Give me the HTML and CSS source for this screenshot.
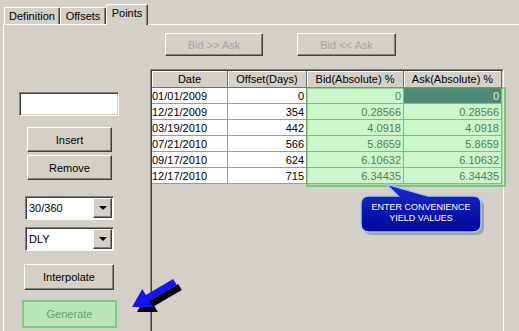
FILE: index.html
```html
<!DOCTYPE html>
<html>
<head>
<meta charset="utf-8">
<title>Points</title>
<link rel="stylesheet" href="styles.css">
</head>
<body>
<div class="window">
  <div class="tabs">
    <div class="tab tab-def">Definition</div>
    <div class="tab tab-off">Offsets</div>
    <div class="tab active">Points</div>
  </div>
  <div class="panel">
    <div class="left">
      <div class="textbox"></div>
      <button class="btn insert">Insert</button>
      <button class="btn remove">Remove</button>
      <div class="combo c1"><span class="val">30/360</span><span class="drop"><i></i></span></div>
      <div class="combo c2"><span class="val">DLY</span><span class="drop"><i></i></span></div>
      <button class="btn interp">Interpolate</button>
      <button class="btn generate">Generate</button>
    </div>
    <div class="right">
      <div class="topbtns">
        <button class="btn dis">Bid &gt;&gt; Ask</button>
        <button class="btn dis">Bid &lt;&lt; Ask</button>
      </div>
      <div class="grid">
        <div class="grid-inner">
          <div class="h">Date</div><div class="h">Offset(Days)</div><div class="h">Bid(Absolute) %</div><div class="h">Ask(Absolute) %</div>
          <div class="c">01/01/2009</div><div class="c r">0</div><div class="c r g">0</div><div class="c r sel">0</div>
          <div class="c">12/21/2009</div><div class="c r">354</div><div class="c r g">0.28566</div><div class="c r g">0.28566</div>
          <div class="c">03/19/2010</div><div class="c r">442</div><div class="c r g">4.0918</div><div class="c r g">4.0918</div>
          <div class="c">07/21/2010</div><div class="c r">566</div><div class="c r g">5.8659</div><div class="c r g">5.8659</div>
          <div class="c">09/17/2010</div><div class="c r">624</div><div class="c r g">6.10632</div><div class="c r g">6.10632</div>
          <div class="c">12/17/2010</div><div class="c r">715</div><div class="c r g">6.34435</div><div class="c r g">6.34435</div>
        </div>
        <div class="highlight"></div>
      </div>
    </div>
  </div>
</div>
<svg class="overlay" width="519" height="331" viewBox="0 0 519 331">
  <defs>
    <linearGradient id="cg" x1="0" y1="0" x2="0" y2="1">
      <stop offset="0" stop-color="#1a2ccc"/>
      <stop offset="1" stop-color="#00069a"/>
    </linearGradient>
  </defs>
  <path d="M369 196 L398 196 L386 184 L428 196 L473 196 Q481 196 481 204 L481 224 Q481 232 473 232 L369 232 Q361 232 361 224 L361 204 Q361 196 369 196 Z" transform="translate(3 3)" fill="rgba(0,0,0,0.22)"/>
  <path d="M369 196 L398 196 L386 184 L428 196 L473 196 Q481 196 481 204 L481 224 Q481 232 473 232 L369 232 Q361 232 361 224 L361 204 Q361 196 369 196 Z" fill="url(#cg)" stroke="#9cc8f0" stroke-width="1.5"/>
  <polygon points="173.2,279 145.8,294.9 142.3,288.9 132,307 152.9,307 149.3,301 176.8,285" transform="translate(5 5)" fill="#000"/>
  <polygon points="173.2,279 145.8,294.9 142.3,288.9 132,307 152.9,307 149.3,301 176.8,285" fill="#1414f5"/>
</svg>
<div class="callout-text">ENTER CONVENIENCE<br>YIELD VALUES</div>
</body>
</html>
```
FILE: styles.css
```css
* { box-sizing: border-box; }
html, body { margin: 0; padding: 0; }
body {
  width: 519px;
  height: 331px;
  overflow: hidden;
  background: #d4d0c8;
  font-family: "Liberation Sans", Arial, sans-serif;
  font-size: 11px;
  color: #000;
  position: relative;
}
.window { padding-left: 3px; }
.tabs {
  display: flex;
  align-items: flex-end;
  height: 24px;
  padding-left: 1px;
}
.tab {
  height: 17px;
  border-top: 1px solid #fff;
  border-left: 1px solid #fff;
  border-right: 1px solid #404040;
  box-shadow: inset -1px 0 #808080;
  border-radius: 2px 2px 0 0;
  display: flex;
  align-items: center;
  justify-content: center;
  white-space: nowrap;
}
.tab-def { width: 56px; }
.tab-off { width: 46px; }
.tab.active {
  width: 42px;
  height: 21px;
  margin-bottom: -1px;
  position: relative;
  z-index: 1;
  background: #d4d0c8;
  align-items: flex-start;
  padding-top: 2px;
}
.panel {
  border-top: 1px solid #fff;
  border-left: 1px solid #fff;
  height: 320px;
  display: flex;
}
.left {
  width: 146px;
  flex: none;
  display: flex;
  flex-direction: column;
  align-items: flex-start;
}
.btn {
  font-family: inherit;
  font-size: 11px;
  background: #d4d0c8;
  border: 1px solid;
  border-color: #fff #404040 #404040 #fff;
  box-shadow: inset -1px -1px #808080;
  padding: 0;
  color: #000;
  display: block;
}
.textbox {
  margin: 67px 0 0 15px;
  width: 100px;
  height: 24px;
  background: #fff;
  border: 1px solid;
  border-color: #808080 #fff #fff #808080;
  box-shadow: inset 1px 1px #404040, inset -1px -1px #d4d0c8;
}
.insert { margin: 11px 0 0 23px; width: 85px; height: 25px; }
.remove { margin: 3px 0 0 23px; width: 85px; height: 25px; }
.combo {
  width: 89px;
  height: 24px;
  background: #fff;
  border: 1px solid;
  border-color: #808080 #fff #fff #808080;
  box-shadow: inset 1px 1px #404040;
  display: flex;
  padding: 1px 1px 1px 1px;
  margin-left: 21px;
}
.c1 { margin-top: 16px; }
.c2 { margin-top: 7px; }
.combo .val {
  flex: 1;
  display: flex;
  align-items: center;
  padding-left: 2px;
}
.combo .drop {
  width: 19px;
  background: #d4d0c8;
  border: 1px solid;
  border-color: #fff #404040 #404040 #fff;
  box-shadow: inset -1px -1px #808080;
  display: flex;
  align-items: center;
  justify-content: center;
}
.combo .drop i {
  display: block;
  width: 0;
  height: 0;
  border-left: 4px solid transparent;
  border-right: 4px solid transparent;
  border-top: 4px solid #000;
}
.interp { margin: 13px 0 0 20px; width: 90px; height: 26px; }
.generate {
  margin: 10px 0 0 18px;
  width: 95px;
  height: 28px;
  background: #b8e6b8;
  border: 2px solid #7fcc7f;
  box-shadow: 0 0 1px #a0dda0;
  color: #6a9a6a;
}
.right {
  flex: 1;
  display: flex;
  flex-direction: column;
}
.topbtns {
  display: flex;
  gap: 34px;
  margin: 8px 0 0 15px;
}
.topbtns .btn {
  width: 98px;
  height: 23px;
  color: #a4a4a4;
}
.topbtns .btn + .btn { width: 99px; }
.grid {
  margin-top: 13px;
  width: 354px;
  height: 280px;
  border: 1px solid;
  border-color: #808080 #fff #fff #808080;
  position: relative;
}
.grid-inner {
  height: 100%;
  border: 1px solid;
  border-color: #404040 #d4d0c8 #d4d0c8 #404040;
  display: grid;
  grid-template-columns: 76px 79px 97px 98px;
  grid-template-rows: 17px repeat(6, 16px);
  align-content: start;
}
.h {
  background: #d4d0c8;
  border-right: 1px solid #707070;
  border-bottom: 1px solid #707070;
  box-shadow: inset 1px 1px #fff;
  display: flex;
  align-items: center;
  justify-content: center;
  white-space: nowrap;
}
.c {
  background: #fff;
  border-right: 1px solid #9a9a9a;
  border-bottom: 1px solid #9a9a9a;
  display: flex;
  align-items: center;
  padding: 0 2px 0 0;
  white-space: nowrap;
}
.c.r { justify-content: flex-end; }
.c.g { color: #404040; }
.c.sel { background: #365378; color: #fff; }
.highlight {
  position: absolute;
  left: 155px;
  top: 17px;
  width: 200px;
  height: 100px;
  background: rgba(120, 230, 120, 0.38);
  border: 2px solid rgba(70, 170, 70, 0.45);
}
.overlay {
  position: absolute;
  left: 0;
  top: 0;
  pointer-events: none;
}
.callout-text {
  position: absolute;
  left: 361px;
  top: 202px;
  width: 120px;
  text-align: center;
  color: #fff;
  font-size: 9px;
  line-height: 11px;
}
```
